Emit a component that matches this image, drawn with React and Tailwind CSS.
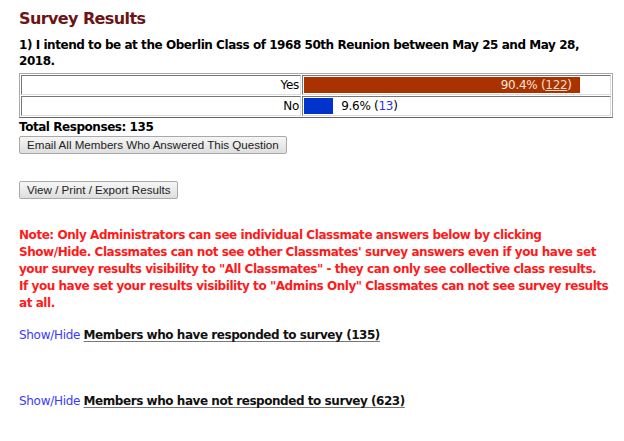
/* Survey results page — single question summary */

const font = "font-['DejaVu_Sans',Tahoma,sans-serif]";

const Bar = ({ pct, count, color, inside }) => (
  <div className="flex items-center h-[16px]">
    <div
      className={`h-full flex items-center justify-end ${color}`}
      style={{ width: `${pct}%` }}
    >
      {inside && (
        <span className="text-[#f7e6dc] pr-2 whitespace-nowrap">
          {pct}% (<a className="underline text-[#f3d9c9]">{count}</a>)
        </span>
      )}
    </div>
    {!inside && (
      <span className="pl-2 whitespace-nowrap">
        {pct}% (<a className="text-[#3333ee]">{count}</a>)
      </span>
    )}
  </div>
);

const Row = ({ label, children }) => (
  <tr>
    <td className="w-[280px] text-right pr-[1px] pl-1 py-0 leading-[16px] border border-t-[#777] border-l-[#777] border-b-[#ddd] border-r-[#ddd]">
      {label}
    </td>
    <td className="p-[1px] border border-t-[#777] border-l-[#777] border-b-[#ddd] border-r-[#ddd]">
      {children}
    </td>
  </tr>
);

const Button = ({ children }) => (
  <button className="font-['Liberation_Sans',Arial,sans-serif] text-[11.6px] leading-none text-[#222] px-[7px] h-[18px] rounded-[2px] border border-[#a9a9a9] bg-gradient-to-b from-[#f6f6f6] to-[#dedede]">
    {children}
  </button>
);

const ShowHide = ({ title }) => (
  <div className="text-[12px] tracking-[-0.3px]">
    <a className="text-[#3a3aff]">Show/Hide</a>{" "}
    <span className="font-bold text-[#111] tracking-[-0.45px] underline underline-offset-2 decoration-[#777]">
      {title}
    </span>
  </div>
);

export default function App() {
  return (
    <div className={`${font} w-[624px] h-[441px] bg-white text-[12px] text-black pl-[19px] pr-[4px] pt-[9px]`}>
      <h1 className="text-[16px] font-bold tracking-[-0.6px] text-[#6d1414] leading-[20px] mb-[8px]">
        Survey Results
      </h1>

      <p className="font-bold tracking-[-0.45px] leading-[16px] pr-[15px]">
        1) I intend to be at the Oberlin Class of 1968 50th Reunion between May 25 and May 28, 2018.
      </p>

      <table className="w-[594px] border-separate border-spacing-[1px] border border-[#aaa] border-b-[#666] mt-[4px] tracking-[-0.3px]">
        <tbody>
          <Row label="Yes">
            <Bar pct={90.4} count={122} color="bg-[#a93200]" inside />
          </Row>
          <Row label="No">
            <Bar pct={9.6} count={13} color="bg-[#0033cc]" />
          </Row>
        </tbody>
      </table>

      <p className="font-bold tracking-[-0.45px] leading-[14px] mt-[2px]">Total Responses: 135</p>
      <div className="mt-[2px]">
        <Button>Email All Members Who Answered This Question</Button>
      </div>
      <div className="mt-[27px]">
        <Button>View / Print / Export Results</Button>
      </div>

      <p className="w-[600px] mt-[28px] font-bold tracking-[-0.45px] text-[#ff1a1a] leading-[17px]">
        Note: Only Administrators can see individual Classmate answers below by clicking<br />
        Show/Hide. Classmates can not see other Classmates' survey answers even if you have set<br />
        your survey results visibility to "All Classmates" - they can only see collective class results.<br />
        If you have set your results visibility to "Admins Only" Classmates can not see survey results<br />
        at all.
      </p>

      <div className="mt-[14px] flex flex-col gap-[48px]">
        <ShowHide title="Members who have responded to survey (135)" />
        <ShowHide title="Members who have not responded to survey (623)" />
      </div>
    </div>
  );
}
